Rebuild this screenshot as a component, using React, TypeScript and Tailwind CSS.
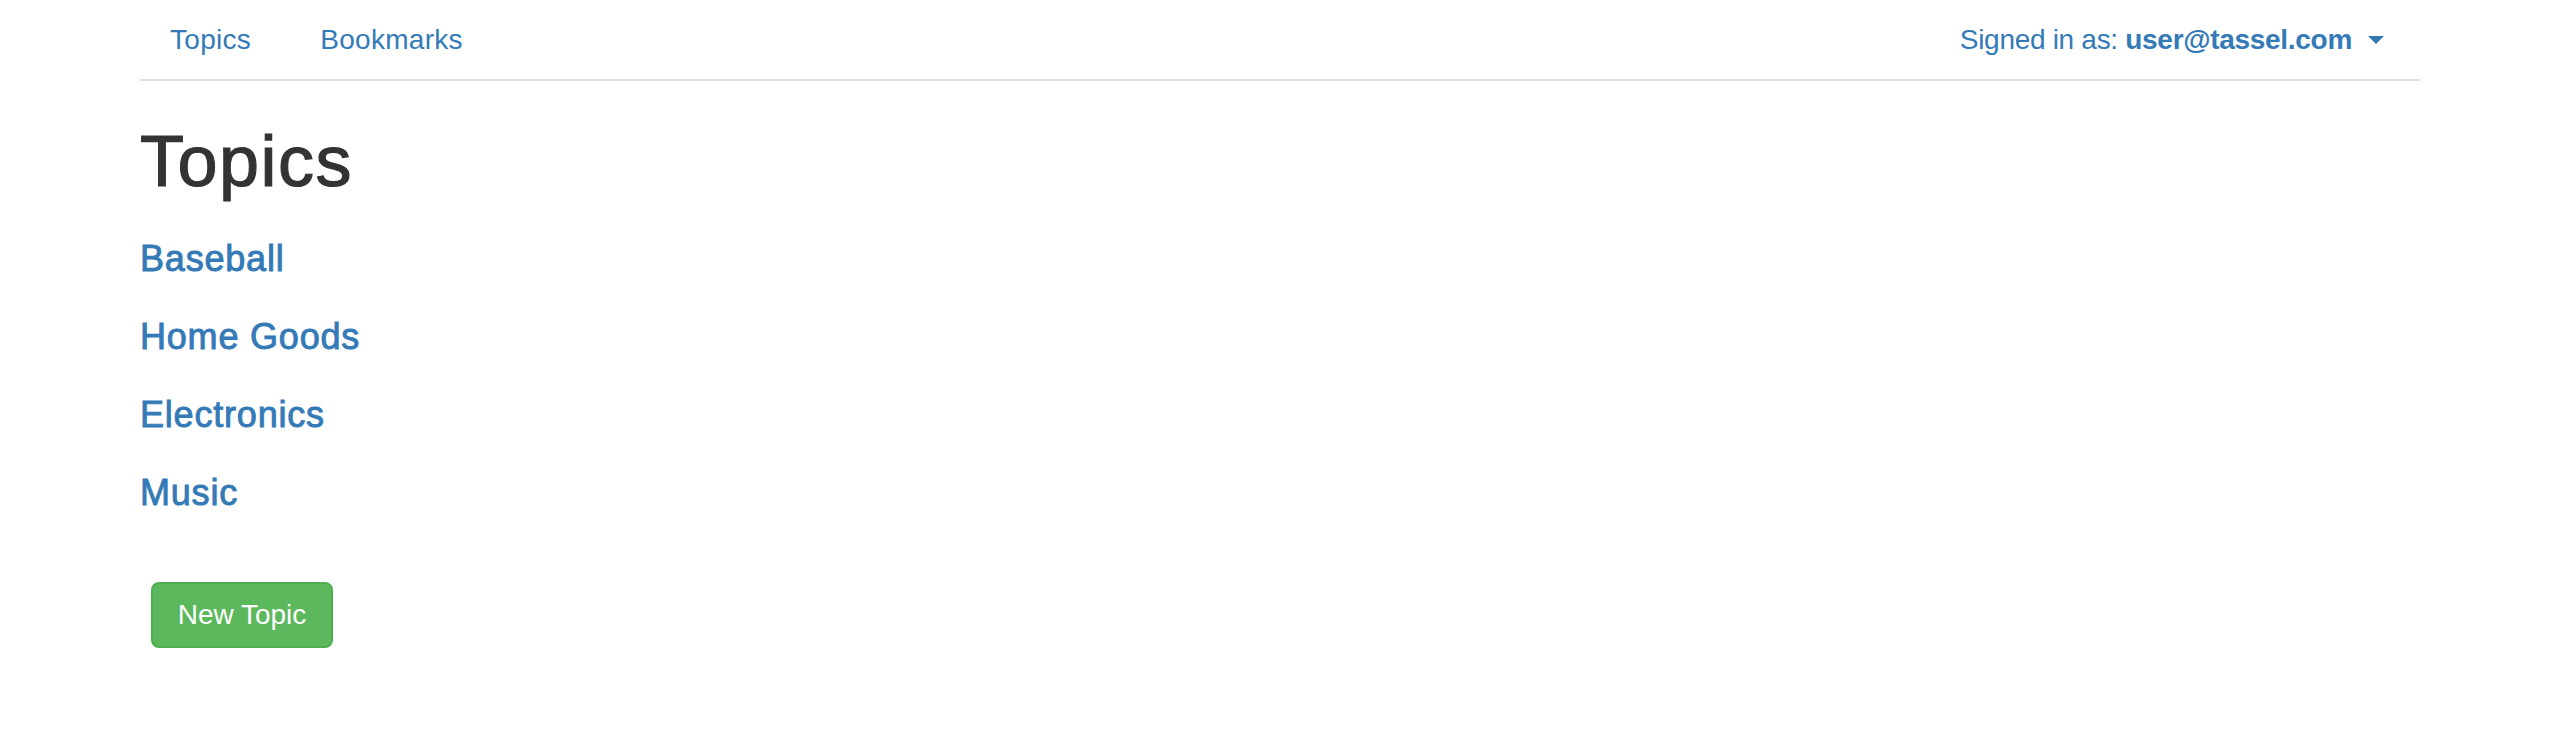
const topics = ['Baseball', 'Home Goods', 'Electronics', 'Music']

export default function App() {
  return (
    <div className="min-h-[741px] w-full bg-white font-['Liberation_Sans',Arial,sans-serif] text-[#333]">
      <div className="mx-auto w-[2280px]">
        {/* nav tabs */}
        <nav className="flex h-[81px] items-start justify-between border-b-2 border-[#ddd]">
          <ul className="flex">
            <li>
              <a href="#" className="block px-[30px] py-[20px] text-[28px] leading-[40px] tracking-[0.3px] text-[#337ab7]">
                Topics
              </a>
            </li>
            <li className="ml-[9px]">
              <a href="#" className="block px-[30px] py-[20px] text-[28px] leading-[40px] tracking-[0.3px] text-[#337ab7]">
                Bookmarks
              </a>
            </li>
          </ul>
          <a href="#" className="flex items-center py-[20px] pr-[36px] text-[28px] leading-[40px] tracking-[-0.3px] text-[#337ab7]">
            <span>
              Signed in as: <span className="font-bold">user@tassel.com</span>
            </span>
            <span className="ml-[16px] inline-block h-0 w-0 border-x-[8px] border-t-[8px] border-x-transparent border-t-[#337ab7]" />
          </a>
        </nav>

        <h1 className="mt-[41px] text-[72px] font-medium leading-[79px] tracking-[1.5px] [-webkit-text-stroke:1.2px_#333]">
          Topics
        </h1>

        <div className="mt-[38px] flex flex-col gap-[38px]">
          {topics.map((t) => (
            <h4
              key={t}
              className="text-[36px] font-medium leading-[40px] tracking-[0.8px] [-webkit-text-stroke:0.9px_#337ab7]"
            >
              <a href="#" className="text-[#337ab7]">
                {t}
              </a>
            </h4>
          ))}
        </div>

        <button
          type="button"
          className="ml-[11px] mt-[69px] flex h-[66px] w-[182px] items-center justify-center rounded-[8px] border-2 border-[#4cae4c] bg-[#5cb85c] text-[28px] text-white"
        >
          New Topic
        </button>
      </div>
    </div>
  )
}
